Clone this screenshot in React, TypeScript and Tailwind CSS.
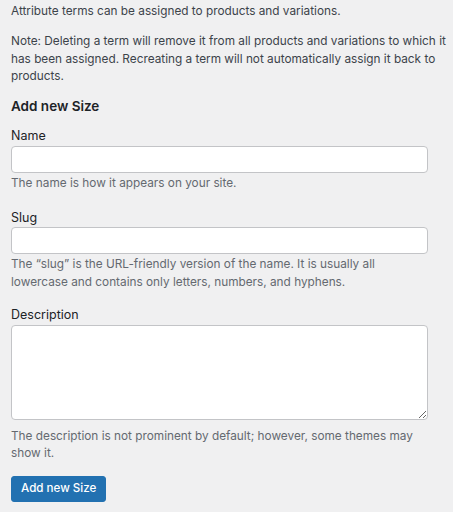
const font = { fontFamily: "Inter, 'Liberation Sans', sans-serif" };

function Help({ children }: { children: React.ReactNode }) {
  return <p className="text-[11.8px] leading-[17.5px] text-[#646970]">{children}</p>;
}

function Label({ children }: { children: React.ReactNode }) {
  return <label className="block text-[12.5px] leading-[17.5px] text-[#1d2327]">{children}</label>;
}

export default function App() {
  return (
    <div className="min-h-[512px] bg-[#f0f0f1] pl-[11px] pr-[1px] pt-[3px]" style={font}>
      <p className="text-[11.8px] leading-[17.5px] text-[#3c434a]">
        Attribute terms can be assigned to products and variations.
      </p>
      <p className="mt-[12.5px] text-[11.8px] leading-[17.5px] text-[#3c434a]">
        Note: Deleting a term will remove it from all products and variations to which it has been
        assigned. Recreating a term will not automatically assign it back to products.
      </p>

      <h2 className="mt-[11.5px] text-[13.5px] font-semibold leading-[18px] text-[#1d2327]">Add new Size</h2>

      <div className="mt-[12px] w-[417px]">
        <Label>Name</Label>
        <input type="text" className="mt-[1.5px] block h-[27px] w-full rounded-[4px] border border-[#c3c4c7] bg-white" />
        <div className="mt-[1.5px]">
          <Help>The name is how it appears on your site.</Help>
        </div>
      </div>

      <div className="mt-[17px] w-[417px]">
        <Label>Slug</Label>
        <input type="text" className="block h-[27px] w-full rounded-[4px] border border-[#c3c4c7] bg-white" />
        <div className="mt-[2.5px]">
          <Help>
            The “slug” is the URL-friendly version of the name. It is usually all lowercase and contains
            only letters, numbers, and hyphens.
          </Help>
        </div>
      </div>

      <div className="mt-[15px] w-[417px]">
        <Label>Description</Label>
        <textarea className="mt-[1.5px] block h-[95px] w-full rounded-[4px] border border-[#c3c4c7] bg-white" />
        <div className="mt-[7.5px]">
          <Help>The description is not prominent by default; however, some themes may show it.</Help>
        </div>
      </div>

      <button className="mt-[13px] h-[26.5px] rounded-[3px] border border-[#2271b1] bg-[#2271b1] px-[9px] text-[11.6px] font-medium text-white">
        Add new Size
      </button>
    </div>
  );
}
